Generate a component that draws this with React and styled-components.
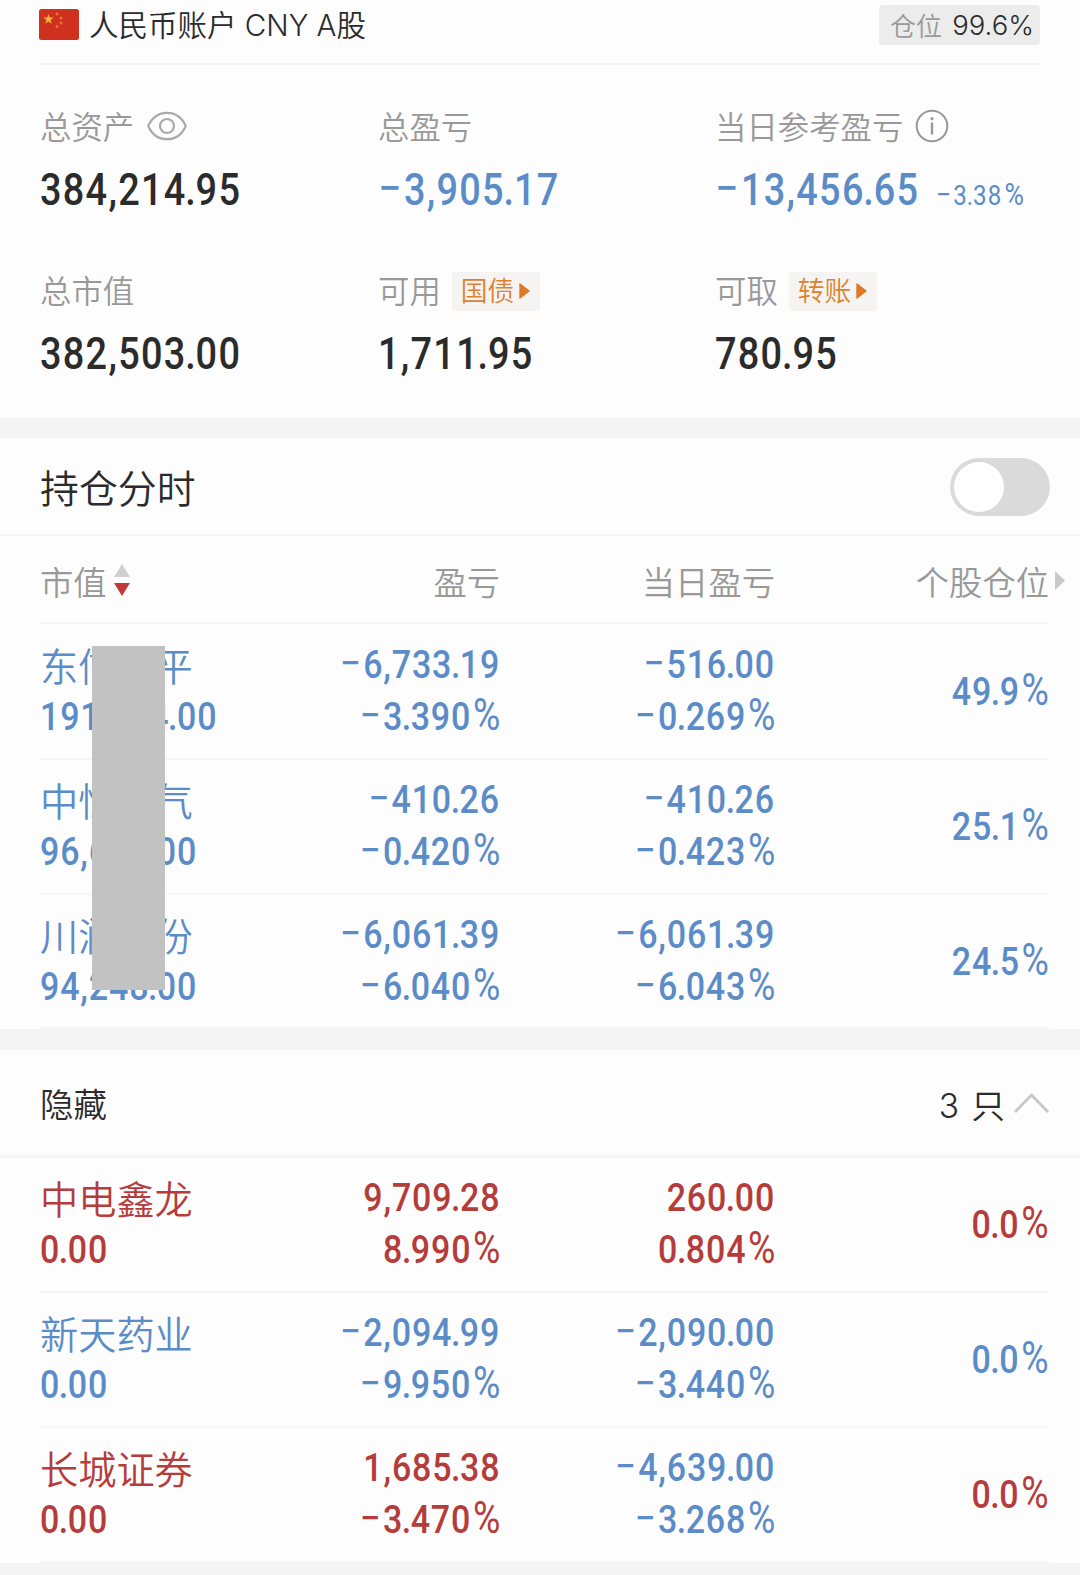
import styled, { createGlobalStyle } from "styled-components";

const BLUE = "#5b8cc8";
const RED = "#b53c3b";

const tones = { blue: BLUE, red: RED, dark: "#2b2b2b" };

const GlobalStyle = createGlobalStyle`
  * {
    box-sizing: border-box;
  }
  body {
    margin: 0;
    background: #fdfdfd;
    font-family: Inter, "Noto Sans CJK SC", sans-serif;
    font-weight: 350;
    color: #2b2b2b;
  }
`;

const Page = styled.div`
  width: 1080px;
  height: 1575px;
  overflow: hidden;
`;

const Header = styled.header`
  display: flex;
  align-items: center;
  height: 65px;
  margin: 0 40px 0 39px;
  padding-bottom: 14px;
  border-bottom: 2px solid #f4f4f4;
`;

const AccountName = styled.h1`
  flex: 1;
  margin: 0 0 0 10px;
  font-size: 29.5px;
  font-weight: 350;
  line-height: 40px;
`;

const Position = styled.div`
  display: flex;
  align-items: center;
  justify-content: space-between;
  width: 161px;
  height: 40px;
  padding: 0 6px 0 11px;
  border-radius: 4px;
  background: #ececec;
  font-size: 27.5px;
`;

const PositionLabel = styled.span`
  color: #999;
  font-size: 26px;
`;

const Summary = styled.section`
  display: grid;
  grid-template-columns: 338px 337px 1fr;
  grid-template-rows: 164px 164px;
  height: 353px;
  padding: 39px 0 0 40px;
`;

const Label = styled.div`
  display: flex;
  align-items: center;
  height: 44px;
  color: #999;
  font-size: 31.4px;
  line-height: 40px;
`;

const LabelText = styled.span`
  margin-top: 3px;
`;

const Value = styled.div`
  display: flex;
  align-items: baseline;
  height: 80px;
  padding-top: 2px;
  line-height: 80px;
`;

// Roboto squeezed and tracked out, to get narrow DIN-like digits
const DigitText = styled.span`
  display: inline-block;
  color: ${(props) => tones[props.$tone]};
  font-family: Roboto, sans-serif;
  font-size: ${(props) => props.$size || 39.5}px;
  font-weight: ${(props) => props.$weight || 500};
  letter-spacing: ${(props) => props.$spacing || 1}px;
  white-space: nowrap;
  transform: scaleX(0.86);
  transform-origin: ${(props) => props.$origin || "left"} center;
`;

const Minus = styled.span`
  margin-right: 1px;
  font-size: 1.1em;
  font-weight: 400;
  line-height: 1;
`;

const Point = styled.span`
  margin: 0 -1.6px;
`;

const Percent = styled.span`
  margin-left: 2px;
  font-size: 1.1em;
  font-weight: 400;
  letter-spacing: 0;
  line-height: 1;
`;

const Digits = ({ children, ...props }) => (
  <DigitText {...props}>
    {children.split(/([−.%])/).map((part, i) => {
      if (part === "−") return <Minus key={i}>{part}</Minus>;
      if (part === ".") return <Point key={i}>{part}</Point>;
      if (part === "%") return <Percent key={i}>{part}</Percent>;
      return part;
    })}
  </DigitText>
);

const DayPercent = styled.div`
  margin-left: -17px;
`;

const Tag = styled.div`
  display: flex;
  align-items: center;
  gap: 5px;
  width: 88px;
  height: 39px;
  margin: 2px 0 0 11px;
  padding-left: 9px;
  border-radius: 3px;
  background: #f5f4f3;
  color: #dc8230;
  font-size: 26.8px;
`;

const Band = styled.div`
  height: ${(props) => props.$height || 20}px;
  background: #f4f4f4;
`;

const Bar = styled.div`
  display: flex;
  align-items: center;
  justify-content: space-between;
  height: ${(props) => props.$height}px;
  padding: 1px 30px 0 40px;
  border-bottom: ${(props) => props.$line || 2}px solid #f6f6f6;
  font-size: ${(props) => props.$size}px;
`;

const BarTitle = styled.span`
  margin-top: -1px;
`;

const Switch = styled.div`
  width: 100px;
  height: 58px;
  padding: 4px;
  border-radius: 29px;
  background: #dadada;
`;

const Knob = styled.div`
  width: 50px;
  height: 50px;
  border-radius: 50%;
  background: #fff;
`;

const Columns = styled.div`
  display: grid;
  grid-template-columns: 200px 260px 275px 274px;
  margin: 0 31px 0 40px;
  border-bottom: 2px solid #f6f6f6;
`;

const TableHead = styled(Columns)`
  height: 88px;
  padding-top: 2px;
  align-items: center;
  color: #999;
  font-size: 33.3px;
`;

const HeadCell = styled.div`
  display: flex;
  align-items: center;
  justify-content: ${(props) => (props.$left ? "flex-start" : "flex-end")};
  gap: 6px;
  white-space: nowrap;
`;

const LastHead = styled(HeadCell)`
  margin-right: -16px;
`;

const Row = styled(Columns)`
  height: 134.75px;
  padding-top: 14px;
`;

const Cell = styled.div`
  display: flex;
  flex-direction: column;
  align-items: ${(props) => (props.$left ? "flex-start" : "flex-end")};
  line-height: 52px;
`;

const Share = styled(Cell)`
  padding-top: 27px;
`;

const StockName = styled.div`
  height: 52px;
  padding-top: 2px;
  color: ${(props) => tones[props.$tone]};
  font-size: 38.2px;
`;

const Holdings = styled.div`
  position: relative;
  padding-top: 1px;
`;

const Cover = styled.div`
  position: absolute;
  left: 92px;
  top: 22px;
  width: 73px;
  height: 344px;
  background: #c2c2c2;
`;

const Count = styled.div`
  display: flex;
  align-items: center;
  gap: 9px;
  word-spacing: 3px;
`;

const Flag = () => (
  <svg width="40" height="31" viewBox="0 0 40 31">
    <rect width="40" height="31" rx="2.5" fill="#d0311f" />
    <path
      d="M9.5 5l1.3 3.6h3.9l-3.1 2.4 1.2 3.8-3.3-2.3-3.3 2.3 1.2-3.8-3.1-2.4h3.9z"
      fill="#f6b13c"
    />
    <g fill="#e8762f">
      <circle cx="18" cy="5" r="1.5" />
      <circle cx="22" cy="9" r="1.5" />
      <circle cx="22" cy="14" r="1.5" />
      <circle cx="18" cy="17.5" r="1.5" />
    </g>
  </svg>
);

const Eye = styled.svg`
  margin-left: 13px;
`;

const EyeIcon = () => (
  <Eye width="40" height="30" viewBox="0 0 40 30" fill="none" stroke="#aaa" strokeWidth="2.2">
    <path d="M1.2 15C5 6.5 12 1.8 20 1.8S35 6.5 38.8 15C35 23.5 28 28.2 20 28.2S5 23.5 1.2 15z" />
    <circle cx="20" cy="15" r="7" />
  </Eye>
);

const Info = styled.svg`
  margin-left: 12px;
`;

const InfoIcon = () => (
  <Info width="34" height="34" viewBox="0 0 34 34" fill="none" stroke="#999" strokeWidth="2">
    <circle cx="17" cy="17" r="15.3" />
    <path d="M17 13.5v12" strokeWidth="2.4" />
    <circle cx="17" cy="9.7" r="1.6" fill="#999" stroke="none" />
  </Info>
);

const TagArrow = () => (
  <svg width="11" height="16" viewBox="0 0 11 16">
    <path
      d="M1 1l9 7-9 7z"
      fill="#dc7a28"
      stroke="#dc7a28"
      strokeWidth="1.4"
      strokeLinejoin="round"
    />
  </svg>
);

const SortIcon = () => (
  <svg width="18" height="32" viewBox="0 0 18 32">
    <path d="M9 0l8 13H1z" fill="#d0d0d0" />
    <path d="M9 32l8-13H1z" fill="#c23a38" />
  </svg>
);

const MoreIcon = () => (
  <svg width="10" height="19" viewBox="0 0 10 19">
    <path d="M0 0l10 9.5L0 19z" fill="#c9c9c9" />
  </svg>
);

const ChevronUp = () => (
  <svg width="36" height="22" viewBox="0 0 36 22" fill="none" stroke="#c8c8c8" strokeWidth="2.8">
    <path d="M1 20L17.5 3l16.5 17" />
  </svg>
);

const holdings = [
  { name: "东信和平", value: "191,014.00", profit: "−6,733.19", rate: "−3.390%", day: "−516.00", dayRate: "−0.269%", share: "49.9%" },
  { name: "中恒电气", value: "96,600.00", profit: "−410.26", rate: "−0.420%", day: "−410.26", dayRate: "−0.423%", share: "25.1%" },
  { name: "川润股份", value: "94,248.00", profit: "−6,061.39", rate: "−6.040%", day: "−6,061.39", dayRate: "−6.043%", share: "24.5%" },
];

const hidden = [
  { name: "中电鑫龙", tone: "red", value: "0.00", profit: "9,709.28", rate: "8.990%", day: "260.00", dayRate: "0.804%", share: "0.0%" },
  { name: "新天药业", value: "0.00", profit: "−2,094.99", rate: "−9.950%", day: "−2,090.00", dayRate: "−3.440%", share: "0.0%" },
  { name: "长城证券", tone: "red", dayTone: "blue", value: "0.00", profit: "1,685.38", rate: "−3.470%", day: "−4,639.00", dayRate: "−3.268%", share: "0.0%" },
];

const StockRow = ({ stock }) => {
  const tone = stock.tone || "blue";
  const dayTone = stock.dayTone || tone;

  return (
    <Row>
      <Cell $left>
        <StockName $tone={tone}>{stock.name}</StockName>
        <Digits $tone={tone}>{stock.value}</Digits>
      </Cell>
      <Cell>
        <Digits $tone={tone} $origin="right">{stock.profit}</Digits>
        <Digits $tone={tone} $origin="right">{stock.rate}</Digits>
      </Cell>
      <Cell>
        <Digits $tone={dayTone} $origin="right">{stock.day}</Digits>
        <Digits $tone={dayTone} $origin="right">{stock.dayRate}</Digits>
      </Cell>
      <Share>
        <Digits $tone={tone} $origin="right">{stock.share}</Digits>
      </Share>
    </Row>
  );
};

const App = () => {
  return (
    <Page>
      <GlobalStyle />
      <Header>
        <Flag />
        <AccountName>人民币账户 CNY A股</AccountName>
        <Position>
          <PositionLabel>仓位</PositionLabel>
          99.6%
        </Position>
      </Header>

      <Summary>
        <div>
          <Label><LabelText>总资产</LabelText><EyeIcon /></Label>
          <Value><Digits $tone="dark" $size={44} $spacing={1.5}>384,214.95</Digits></Value>
        </div>
        <div>
          <Label><LabelText>总盈亏</LabelText></Label>
          <Value><Digits $tone="blue" $size={44} $spacing={1.5}>−3,905.17</Digits></Value>
        </div>
        <div>
          <Label><LabelText>当日参考盈亏</LabelText><InfoIcon /></Label>
          <Value>
            <Digits $tone="blue" $size={44} $spacing={1.5}>−13,456.65</Digits>
            <DayPercent>
              <Digits $tone="blue" $size={28} $weight={400} $spacing={1.5}>−3.38%</Digits>
            </DayPercent>
          </Value>
        </div>
        <div>
          <Label><LabelText>总市值</LabelText></Label>
          <Value><Digits $tone="dark" $size={44} $spacing={1.5}>382,503.00</Digits></Value>
        </div>
        <div>
          <Label>
            <LabelText>可用</LabelText>
            <Tag>国债<TagArrow /></Tag>
          </Label>
          <Value><Digits $tone="dark" $size={44} $spacing={1.5}>1,711.95</Digits></Value>
        </div>
        <div>
          <Label>
            <LabelText>可取</LabelText>
            <Tag>转账<TagArrow /></Tag>
          </Label>
          <Value><Digits $tone="dark" $size={44} $spacing={1.5}>780.95</Digits></Value>
        </div>
      </Summary>
      <Band />

      <Bar $height={98} $size={38.9}>
        <BarTitle>持仓分时</BarTitle>
        <Switch><Knob /></Switch>
      </Bar>
      <TableHead>
        <HeadCell $left>市值<SortIcon /></HeadCell>
        <HeadCell>盈亏</HeadCell>
        <HeadCell>当日盈亏</HeadCell>
        <LastHead>个股仓位<MoreIcon /></LastHead>
      </TableHead>
      <Holdings>
        {holdings.map((stock) => (
          <StockRow key={stock.name} stock={stock} />
        ))}
        <Cover />
      </Holdings>
      <Band $height={21} />

      <Bar $height={108} $size={33.5} $line={3}>
        <BarTitle>隐藏</BarTitle>
        <Count>3 只<ChevronUp /></Count>
      </Bar>
      {hidden.map((stock) => (
        <StockRow key={stock.name} stock={stock} />
      ))}
      <Band />
    </Page>
  );
};

export default App;
